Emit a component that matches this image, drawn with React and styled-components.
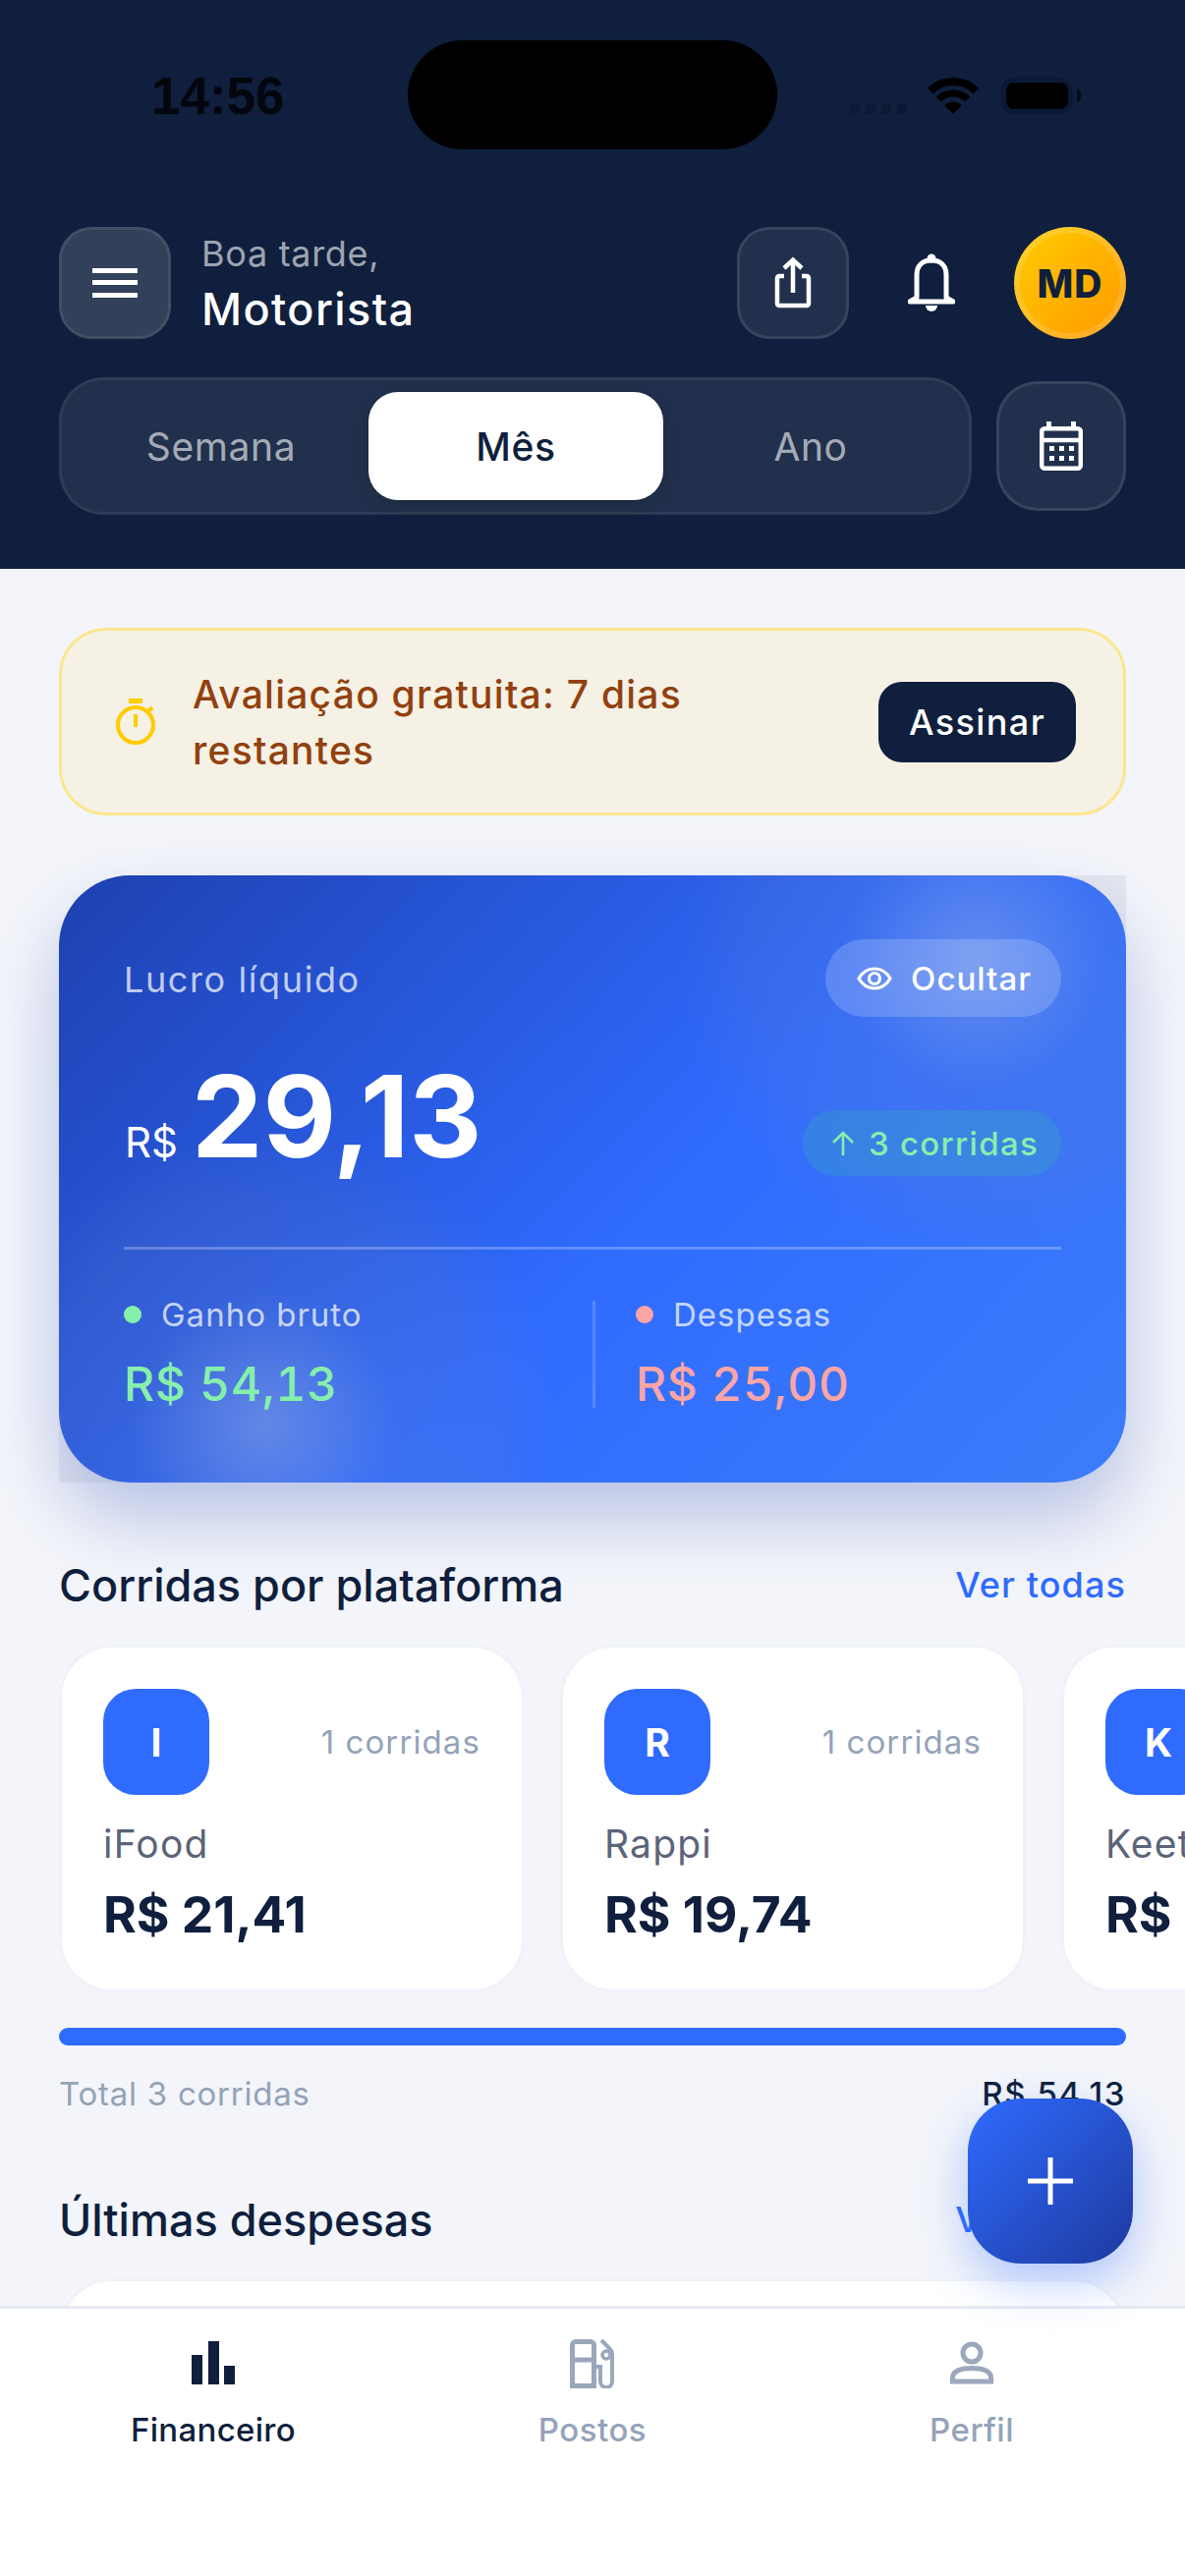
import { createGlobalStyle } from "styled-components";
import styled from "styled-components";

const GlobalStyle = createGlobalStyle`
  * {
    box-sizing: border-box;
  }

  html, body {
    margin: 0;
    padding: 0;
    background: #f3f5fa;
    font-family: Inter, "Noto Sans", sans-serif;
  }
`;

const platforms = [
  { letter: "I", name: "iFood", rides: "1 corridas", value: "R$ 21,41" },
  { letter: "R", name: "Rappi", rides: "1 corridas", value: "R$ 19,74" },
  { letter: "K", name: "Keeta", rides: "1 corridas", value: "R$ 12,98" },
];

function App() {
  return (
    <Screen>
      <GlobalStyle />
      <Header>
        <StatusBar>
          <Clock>14:56</Clock>
          <Island />
          <StatusIcons width="235" height="40" viewBox="0 0 235 40">
            <g fill="#0b1934">
              <rect x="0" y="28" width="10" height="10" rx="4" />
              <rect x="16" y="28" width="10" height="10" rx="4" />
              <rect x="32" y="28" width="10" height="10" rx="4" />
              <rect x="48" y="28" width="10" height="10" rx="4" />
            </g>
            <path d="M81.7 14.7A33 33 0 0 1 128.3 14.7" fill="none" stroke="#000" strokeWidth="8" />
            <path d="M90.15 23.15A21 21 0 0 1 119.85 23.15" fill="none" stroke="#000" strokeWidth="7" />
            <path d="M105 38L96.2 29.2A12.5 12.5 0 0 1 113.8 29.2Z" fill="#000" />
            <rect x="156" y="3" width="68" height="33" rx="11" fill="none" stroke="#0b1934" strokeWidth="5" />
            <rect x="159" y="6" width="63" height="27" rx="8" fill="#000" />
            <path d="M231 12C234 14 235 16 235 19C235 22 234 25 231 27Z" fill="#050a14" />
          </StatusIcons>
        </StatusBar>

        <TopRow>
          <MenuButton>
            <svg width="46" height="30" viewBox="0 0 46 30" fill="#fff">
              <rect y="0" width="46" height="5" />
              <rect y="12" width="46" height="5" />
              <rect y="25" width="46" height="5" />
            </svg>
          </MenuButton>
          <Greeting>
            <Hello>Boa tarde,</Hello>
            <UserName>Motorista</UserName>
          </Greeting>
          <ShareButton>
            <svg width="48" height="54" viewBox="0 0 48 54" fill="none" stroke="#fff" strokeWidth="4.5">
              <path d="M15 20H10a2 2 0 0 0-2 2V48a2 2 0 0 0 2 2H38a2 2 0 0 0 2-2V22a2 2 0 0 0-2-2H33" />
              <path d="M24 37V5" />
              <path d="M15 12L24 3.5L33 12" />
            </svg>
          </ShareButton>
          <BellButton>
            <svg width="48" height="60" viewBox="0 0 48 60">
              <path
                d="M9 45V22C9 12 15 7 24 7C33 7 39 12 39 22V45L46 49H2Z"
                fill="none"
                stroke="#fff"
                strokeWidth="5"
                strokeLinejoin="round"
              />
              <circle cx="24" cy="5" r="4.5" fill="#fff" />
              <path d="M18 53H30A6 6 0 0 1 18 53Z" fill="#fff" />
            </svg>
          </BellButton>
          <Avatar>MD</Avatar>
        </TopRow>

        <PeriodRow>
          <PeriodTabs>
            <PeriodTab>Semana</PeriodTab>
            <PeriodTab $active>Mês</PeriodTab>
            <PeriodTab>Ano</PeriodTab>
          </PeriodTabs>
          <CalendarButton>
            <svg width="44" height="50" viewBox="0 0 44 50" fill="none" stroke="#fff" strokeWidth="4.5">
              <rect x="2.2" y="7.2" width="39.6" height="40.6" rx="3" />
              <path d="M2 19H42" />
              <path d="M9.5 0V7M34.5 0V7" strokeWidth="5" />
              <g fill="#fff" stroke="none">
                <rect x="10" y="25" width="5" height="5" />
                <rect x="20" y="25" width="5" height="5" />
                <rect x="30" y="25" width="5" height="5" />
                <rect x="10" y="35" width="5" height="5" />
                <rect x="20" y="35" width="5" height="5" />
                <rect x="30" y="35" width="5" height="5" />
              </g>
            </svg>
          </CalendarButton>
        </PeriodRow>
      </Header>

      <Main>
        <TrialBanner>
          <svg width="42" height="48" viewBox="0 0 42 48" fill="none" stroke="#ffcc00" strokeWidth="4">
            <path d="M13 2.5H27" strokeWidth="5" />
            <circle cx="20" cy="27" r="18" />
            <path d="M20 16V29" />
            <path d="M32 14L37 9" />
          </svg>
          <TrialText>Avaliação gratuita: 7 dias restantes</TrialText>
          <SubscribeButton>Assinar</SubscribeButton>
        </TrialBanner>

        <Hero>
          <GlowLayer>
            <Glow $top />
            <Glow />
          </GlowLayer>
          <HeroContent>
            <HeroTop>
              <HeroLabel>Lucro líquido</HeroLabel>
              <HidePill>
                <svg width="36" height="24" viewBox="0 0 36 24" fill="none" stroke="#fff" strokeWidth="3.2">
                  <path d="M2 12C6 5 11 2 18 2C25 2 30 5 34 12C30 19 25 22 18 22C11 22 6 19 2 12Z" />
                  <circle cx="18" cy="12" r="5.5" />
                </svg>
                Ocultar
              </HidePill>
            </HeroTop>
            <AmountRow>
              <Amount>
                <Currency>R$</Currency>
                <Total>29,13</Total>
              </Amount>
              <RidesPill>
                <svg width="24" height="26" viewBox="0 0 24 26" fill="none" stroke="#86efac" strokeWidth="2.6">
                  <path d="M12 25V2M2 12L12 2L22 12" />
                </svg>
                3 corridas
              </RidesPill>
            </AmountRow>
            <HeroDivider />
            <Stats>
              <Stat>
                <StatLabel>
                  <Dot $color="#86efac" />
                  Ganho bruto
                </StatLabel>
                <StatValue $color="#86efac">R$ 54,13</StatValue>
              </Stat>
              <Stat $divided>
                <StatLabel>
                  <Dot $color="#fca5a5" />
                  Despesas
                </StatLabel>
                <StatValue $color="#fca5a5">R$ 25,00</StatValue>
              </Stat>
            </Stats>
          </HeroContent>
        </Hero>

        <SectionHead>
          <SectionTitle>Corridas por plataforma</SectionTitle>
          <SeeAll>Ver todas</SeeAll>
        </SectionHead>

        <PlatformRow>
          {platforms.map((p) => (
            <PlatformCard key={p.name}>
              <PlatformTop>
                <PlatformBadge>{p.letter}</PlatformBadge>
                <PlatformRides>{p.rides}</PlatformRides>
              </PlatformTop>
              <PlatformName>{p.name}</PlatformName>
              <PlatformValue>{p.value}</PlatformValue>
            </PlatformCard>
          ))}
        </PlatformRow>

        <ProgressBar />
        <TotalRow>
          <TotalLabel>Total 3 corridas</TotalLabel>
          <TotalValue>R$ 54,13</TotalValue>
        </TotalRow>

        <SectionHead>
          <SectionTitle>Últimas despesas</SectionTitle>
          <SeeAll>Ver todas</SeeAll>
        </SectionHead>
        <ExpensesCard />
      </Main>

      <Fab>
        <svg width="46" height="48" viewBox="0 0 46 48" stroke="#fff" strokeWidth="5">
          <path d="M23 0V48M0 24H46" />
        </svg>
      </Fab>

      <TabBar>
        <TabItem $active>
          <svg width="44" height="50" viewBox="0 0 44 50" fill="#0f1f3d">
            <rect x="0" y="16" width="11" height="30" />
            <rect x="17" y="2" width="11" height="44" />
            <rect x="33" y="27" width="11" height="19" />
          </svg>
          Financeiro
        </TabItem>
        <TabItem>
          <svg width="46" height="50" viewBox="0 0 46 50" fill="none" stroke="#9aa7bc" strokeWidth="5">
            <path d="M2.5 49V6a3.5 3.5 0 0 1 3.5-3.5H21a3.5 3.5 0 0 1 3.5 3.5V49" />
            <path d="M0 47.5H27M2.5 21H24.5" />
            <path d="M25 28H31V43a6 6 0 0 0 12 0V15C43 12 41 10 39 8L32 1" strokeWidth="4" />
            <circle cx="37" cy="16" r="4" strokeWidth="3.5" />
          </svg>
          Postos
        </TabItem>
        <TabItem>
          <svg width="44" height="50" viewBox="0 0 44 50" fill="none" stroke="#9aa7bc" strokeWidth="5">
            <circle cx="22" cy="14" r="9" />
            <path d="M2.5 43V39C2.5 32 12 29.5 22 29.5C32 29.5 41.5 32 41.5 39V43Z" />
          </svg>
          Perfil
        </TabItem>
      </TabBar>
    </Screen>
  );
}

const Screen = styled.div`
  position: relative;
  display: flex;
  flex-direction: column;
  width: 1206px;
  height: 2622px;
  overflow: hidden;
  background: #f3f5fa;
`;

const Header = styled.header`
  flex: none;
  height: 579px;
  padding: 0 60px;
  background: #0f1f3d;
`;

const StatusBar = styled.div`
  display: flex;
  align-items: center;
  height: 111px;
  margin: 41px -60px 0;
  padding-left: 154px;
`;

const Clock = styled.span`
  width: 261px;
  margin-top: 2px;
  font-family: "Liberation Sans", sans-serif;
  font-size: 53px;
  font-weight: 700;
  color: #03060c;
`;

const Island = styled.div`
  width: 376px;
  height: 111px;
  border-radius: 56px;
  background: #000;
`;

const StatusIcons = styled.svg`
  margin: 3px 0 0 74px;
`;

const TopRow = styled.div`
  display: flex;
  align-items: center;
  gap: 27px;
  margin-top: 79px;
`;

const IconButton = styled.button`
  display: flex;
  align-items: center;
  justify-content: center;
  flex: none;
  width: 114px;
  height: 114px;
  padding: 0;
  border: 3px solid rgba(255, 255, 255, 0.1);
  border-radius: 33px;
  background: rgba(255, 255, 255, 0.08);
`;

const MenuButton = styled(IconButton)`
  background: rgba(255, 255, 255, 0.15);
  border-color: rgba(255, 255, 255, 0.08);
`;

const ShareButton = styled(IconButton)``;

const BellButton = styled(IconButton)`
  border: 0;
  background: transparent;
`;

const Greeting = styled.div`
  flex: 1;
  margin-left: 4px;
`;

const Hello = styled.div`
  font-size: 36px;
  line-height: 48px;
  letter-spacing: 0.7px;
  color: rgba(255, 255, 255, 0.6);
`;

const UserName = styled.div`
  margin-top: 6px;
  font-size: 45px;
  line-height: 54px;
  font-weight: 500;
  letter-spacing: 1.4px;
  color: #fff;
`;

const Avatar = styled.div`
  display: flex;
  align-items: center;
  justify-content: center;
  flex: none;
  width: 114px;
  height: 114px;
  border: 6px solid rgba(255, 255, 255, 0.15);
  border-radius: 50%;
  background: linear-gradient(135deg, #ffcc00, #ff9900);
  background-origin: border-box;
  font-size: 39px;
  font-weight: 800;
  letter-spacing: 1px;
  color: #0f1f3d;
`;

const PeriodRow = styled.div`
  display: flex;
  align-items: center;
  gap: 25px;
  margin-top: 39px;
`;

const PeriodTabs = styled.div`
  display: grid;
  grid-template-columns: repeat(3, 300px);
  width: 929px;
  height: 140px;
  padding: 12px;
  border: 3px solid rgba(255, 255, 255, 0.06);
  border-radius: 45px;
  background: rgba(255, 255, 255, 0.08);
`;

const PeriodTab = styled.div`
  display: flex;
  align-items: center;
  justify-content: center;
  border-radius: 30px;
  background: ${(p) => (p.$active ? "#fff" : "transparent")};
  box-shadow: ${(p) => (p.$active ? "0 6px 18px rgba(0, 0, 0, 0.12)" : "none")};
  font-size: 39px;
  font-weight: ${(p) => (p.$active ? 500 : 400)};
  letter-spacing: 0.6px;
  color: ${(p) => (p.$active ? "#0f1f3d" : "rgba(255, 255, 255, 0.62)")};
`;

const CalendarButton = styled(IconButton)`
  width: 132px;
  height: 132px;
  border-radius: 42px;
`;

const Main = styled.main`
  flex: 1;
  min-height: 0;
  overflow: hidden;
  padding: 60px 60px 0;
`;

const TrialBanner = styled.div`
  display: flex;
  align-items: center;
  gap: 36px;
  height: 191px;
  padding: 0 48px 0 55px;
  border: 3px solid #fbe68f;
  border-radius: 48px;
  background: #f5f1e4;
`;

const TrialText = styled.div`
  flex: 1;
  font-size: 39px;
  line-height: 57px;
  font-weight: 500;
  letter-spacing: 1.25px;
  color: #92400e;
`;

const SubscribeButton = styled.button`
  flex: none;
  width: 201px;
  height: 82px;
  padding: 0;
  border: 0;
  border-radius: 24px;
  background: #0f1f3d;
  font-family: inherit;
  font-size: 36px;
  font-weight: 500;
  letter-spacing: 1.4px;
  color: #fff;
`;

const Hero = styled.section`
  position: relative;
  height: 618px;
  margin-top: 61px;
  border-radius: 72px;
  background: linear-gradient(135deg, #1e40af 0%, #2f6bff 55%, #3d7dfa 100%);
  box-shadow: 0 36px 72px rgba(30, 64, 175, 0.28);
`;

const GlowLayer = styled.div`
  position: absolute;
  inset: 0;
  overflow: hidden;
`;

const Glow = styled.div`
  position: absolute;
  width: 600px;
  height: 600px;
  left: ${(p) => (p.$top ? "632px" : "-90px")};
  top: ${(p) => (p.$top ? "-216px" : "259px")};
  background: radial-gradient(
    circle closest-side,
    rgba(195, 200, 210, ${(p) => (p.$top ? 0.34 : 0.36)}) 0%,
    rgba(130, 140, 175, 0.14) 45%,
    rgba(120, 130, 170, 0.12) 75%,
    rgba(120, 130, 170, 0) 100%
  );
`;

const HeroContent = styled.div`
  position: relative;
  padding: 65px 66px 0;
`;

const HeroTop = styled.div`
  display: flex;
  align-items: center;
  justify-content: space-between;
`;

const HeroLabel = styled.div`
  margin-top: 2px;
  font-size: 36px;
  letter-spacing: 1.6px;
  color: rgba(255, 255, 255, 0.72);
`;

const HidePill = styled.div`
  display: flex;
  align-items: center;
  gap: 19px;
  height: 79px;
  padding: 0 30px 0 32px;
  border-radius: 40px;
  background: rgba(255, 255, 255, 0.18);
  font-size: 33px;
  font-weight: 500;
  letter-spacing: 1px;
  color: #fff;
`;

const AmountRow = styled.div`
  display: flex;
  align-items: flex-start;
  justify-content: space-between;
  margin-top: 50px;
`;

const Amount = styled.div`
  display: flex;
  align-items: baseline;
  gap: 14px;
  height: 100px;
  margin-top: 2px;
  color: #fff;
`;

const Currency = styled.span`
  margin-left: 1px;
  font-size: 42px;
  line-height: 100px;
`;

const Total = styled.span`
  font-size: 115px;
  line-height: 100px;
  font-weight: 700;
`;

const RidesPill = styled.div`
  display: flex;
  align-items: center;
  gap: 14px;
  height: 67px;
  margin-top: 45px;
  padding: 0 23px 0 29px;
  border-radius: 34px;
  background: rgba(52, 211, 153, 0.18);
  font-size: 33px;
  font-weight: 500;
  letter-spacing: 1.3px;
  color: #86efac;
`;

const HeroDivider = styled.div`
  height: 3px;
  margin-top: 72px;
  background: rgba(255, 255, 255, 0.25);
`;

const Stats = styled.div`
  display: grid;
  grid-template-columns: 1fr 1fr;
  margin-top: 52px;
`;

const Stat = styled.div`
  height: 109px;
  padding-left: ${(p) => (p.$divided ? "41px" : "0")};
  border-left: ${(p) => (p.$divided ? "3px solid rgba(255, 255, 255, 0.18)" : "0")};
`;

const StatLabel = styled.div`
  display: flex;
  align-items: center;
  gap: 20px;
  height: 28px;
  font-size: 33px;
  letter-spacing: 1px;
  color: rgba(255, 255, 255, 0.72);
`;

const Dot = styled.span`
  flex: none;
  width: 18px;
  height: 18px;
  border-radius: 50%;
  background: ${(p) => p.$color};
`;

const StatValue = styled.div`
  margin-top: 33px;
  font-size: 48px;
  line-height: 48px;
  font-weight: 500;
  font-variant-numeric: tabular-nums;
  letter-spacing: 0.7px;
  color: ${(p) => p.$color};
`;

const SectionHead = styled.div`
  display: flex;
  align-items: center;
  justify-content: space-between;
  height: 60px;
  margin-top: 74px;
`;

const SectionTitle = styled.h2`
  margin: 0;
  font-size: 45px;
  font-weight: 500;
  color: #0f1f3d;
`;

const SeeAll = styled.span`
  font-size: 36px;
  font-weight: 500;
  letter-spacing: 1.1px;
  color: #2f6bff;
`;

const PlatformRow = styled.div`
  display: flex;
  gap: 36px;
  margin: 31px -60px 0 0;
  overflow: hidden;
`;

const PlatformCard = styled.article`
  flex: none;
  width: 474px;
  height: 354px;
  padding: 42px;
  border: 3px solid #f0f2f8;
  border-radius: 54px;
  background: #fff;
`;

const PlatformTop = styled.div`
  display: flex;
  align-items: center;
  justify-content: space-between;
`;

const PlatformBadge = styled.div`
  display: flex;
  align-items: center;
  justify-content: center;
  width: 108px;
  height: 108px;
  border-radius: 33px;
  background: #2f6bff;
  font-size: 39px;
  font-weight: 700;
  color: #fff;
`;

const PlatformRides = styled.span`
  font-size: 33px;
  letter-spacing: 1.1px;
  color: #94a3b8;
`;

const PlatformName = styled.div`
  margin-top: 27px;
  font-size: 39px;
  line-height: 46px;
  letter-spacing: 1.2px;
  color: #5b6478;
`;

const PlatformValue = styled.div`
  margin-top: 17px;
  font-size: 51.5px;
  line-height: 62px;
  font-weight: 700;
  color: #0f1f3d;
`;

const ProgressBar = styled.div`
  height: 18px;
  margin-top: 36px;
  border-radius: 9px;
  background: #2f6bff;
`;

const TotalRow = styled.div`
  display: flex;
  align-items: center;
  justify-content: space-between;
  height: 48px;
  margin-top: 25px;
  font-size: 33px;
`;

const TotalLabel = styled.span`
  letter-spacing: 0.75px;
  color: #94a3b8;
`;

const TotalValue = styled.span`
  font-weight: 500;
  letter-spacing: 1.6px;
  color: #0f1f3d;
`;

const ExpensesCard = styled.div`
  height: 200px;
  margin-top: 30px;
  border: 3px solid #f0f2f8;
  border-radius: 54px;
  background: #fff;
`;

const Fab = styled.button`
  position: absolute;
  left: 985px;
  top: 2136px;
  display: flex;
  align-items: center;
  justify-content: center;
  width: 168px;
  height: 168px;
  padding: 0;
  border: 0;
  border-radius: 54px;
  background: linear-gradient(135deg, #2f6bff, #1e3a9f);
  box-shadow: 0 18px 48px rgba(47, 107, 255, 0.35);
`;

const TabBar = styled.nav`
  display: grid;
  grid-template-columns: repeat(3, 386px);
  flex: none;
  height: 275px;
  padding: 31px 24px 0;
  border-top: 3px solid #e6eaf2;
  background: #fff;
`;

const TabItem = styled.div`
  display: flex;
  flex-direction: column;
  align-items: center;
  gap: 22px;
  font-size: 33px;
  line-height: 40px;
  font-weight: 500;
  letter-spacing: ${(p) => (p.$active ? "0.3px" : "0.5px")};
  color: ${(p) => (p.$active ? "#0f1f3d" : "#94a3b8")};
`;

export default App;
